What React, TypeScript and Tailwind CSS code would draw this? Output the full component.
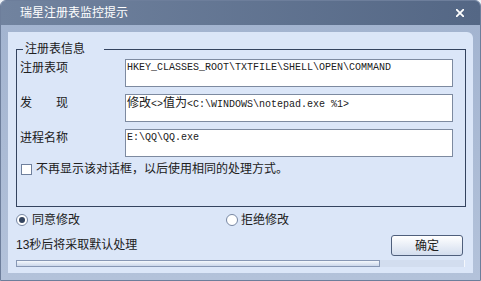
export default function App() {
  const font = "font-['Liberation_Sans','Noto_Sans_CJK_SC',sans-serif]";
  const mono = "font-['Liberation_Mono','Noto_Sans_CJK_SC',monospace] text-[10px]";
  return (
    <div className="w-[481px] h-[281px] bg-[#eef2f7]">
      <div
        className={`w-[481px] h-[281px] flex flex-col rounded-t-[6px] border border-[#6d7e9b] bg-[#a8b8d2] overflow-hidden text-[12px] text-[#202020] ${font}`}
      >
        {/* Title bar */}
        <div className="h-[24px] shrink-0 flex items-center justify-between pl-[19px] pr-[16px] bg-gradient-to-r from-[#71839f] to-[#546785] text-white">
          <span className="leading-[16px]">瑞星注册表监控提示</span>
          <svg width="8" height="8" viewBox="0 0 8 8">
            <path d="M0.5 0.5 L7.5 7.5 M7.5 0.5 L0.5 7.5" stroke="white" strokeWidth="1.8" strokeLinecap="square" />
          </svg>
        </div>
        {/* Frame */}
        <div className="flex-1 flex flex-col pt-[7px] pl-[7px] pr-[7px] pb-[7px] bg-gradient-to-b from-[#a3b4d0] to-[#b3c2da]">
          <div className="flex-1 flex flex-col bg-[#dbe6f8] rounded-tr-[6px] pl-[8px] pr-[7px] pt-[9px]">
            <fieldset className="border border-[#34435f] pl-[3px] pr-[12px] pb-[29px] m-0">
              <legend className="ml-[3px] pl-[2px] pr-[19px] leading-[16px]">注册表信息</legend>
              <div className="flex flex-col gap-[7px] pt-[2px]">
                <div className="flex items-start">
                  <div className="w-[105px] leading-[16px] pt-[1px]">注册表项</div>
                  <div className={`w-[328px] h-[28px] bg-white border border-[#7d8aa0] pl-[1px] leading-[16px] ${mono}`}>
                    HKEY_CLASSES_ROOT\TXTFILE\SHELL\OPEN\COMMAND
                  </div>
                </div>
                <div className="flex items-start">
                  <div className="w-[105px] leading-[16px] pt-[1px] whitespace-pre">发　　现</div>
                  <div className={`w-[328px] h-[28px] bg-white border border-[#7d8aa0] pl-[1px] leading-[16px] ${mono}`}>
                    <span className={`text-[12px] ${font}`}>修改</span>&lt;&gt;<span className={`text-[12px] ${font}`}>值为</span>&lt;C:\WINDOWS\notepad.exe %1&gt;
                  </div>
                </div>
                <div className="flex items-start">
                  <div className="w-[105px] leading-[16px] pt-[1px]">进程名称</div>
                  <div className={`w-[328px] h-[28px] bg-white border border-[#7d8aa0] pl-[1px] leading-[16px] ${mono}`}>
                    E:\QQ\QQ.exe
                  </div>
                </div>
              </div>
              <div className="flex items-center mt-[4px] pl-[1px] leading-[16px]">
                <div className="w-[11px] h-[11px] bg-white border border-[#6f809d]" />
                <span className="ml-[4px]">不再显示该对话框，以后使用相同的处理方式。</span>
              </div>
            </fieldset>
            {/* Radios */}
            <div className="flex items-center mt-[5px] leading-[16px]">
              <div className="w-[210px] flex items-center">
                <div className="w-[12px] h-[12px] rounded-full bg-white border border-[#7787a3] flex items-center justify-center">
                  <div className="w-[6px] h-[6px] rounded-full bg-[#34445f]" />
                </div>
                <span className="ml-[4px]">同意修改</span>
              </div>
              <div className="flex items-center">
                <div className="w-[12px] h-[12px] rounded-full bg-white border border-[#7787a3]" />
                <span className="ml-[3px]">拒绝修改</span>
              </div>
            </div>
            {/* Status + button */}
            <div className="flex items-start justify-between mt-[7px]">
              <span className="leading-[16px] pt-[2px]">13秒后将采取默认处理</span>
              <button className="w-[72px] h-[21px] mr-[3px] rounded-[3px] border border-[#4f5f7c] bg-gradient-to-b from-[#ffffff] to-[#d3ddee] leading-[16px] text-[#202020]">
                确定
              </button>
            </div>
            {/* Progress */}
            <div className="mt-[4px] mr-[1px] h-[7px] flex bg-[#d2ddef] border-r border-[#f4f7fc]">
              <div className="w-[364px] h-[7px] border border-[#8797b4] bg-gradient-to-b from-[#f4f7fc] to-[#cbd7ea]" />
            </div>
          </div>
        </div>
      </div>
    </div>
  );
}
